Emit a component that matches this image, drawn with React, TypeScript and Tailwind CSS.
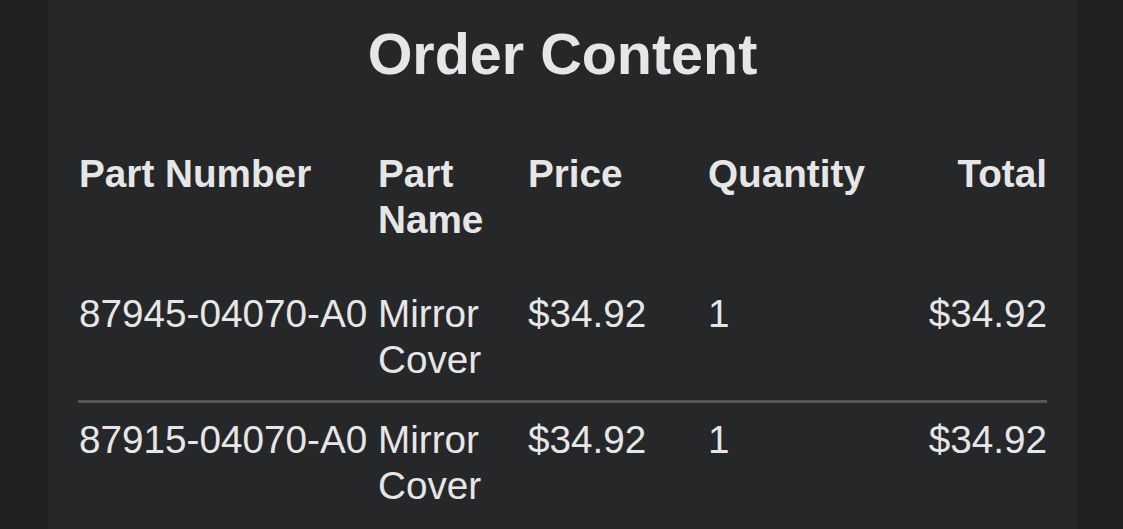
import React from "react";

type OrderLine = {
  partNumber: string;
  partName: string;
  price: string;
  quantity: number;
  total: string;
};

const LINES: OrderLine[] = [
  { partNumber: "87945-04070-A0", partName: "Mirror Cover", price: "$34.92", quantity: 1, total: "$34.92" },
  { partNumber: "87915-04070-A0", partName: "Mirror Cover", price: "$34.92", quantity: 1, total: "$34.92" },
];

export default function App() {
  return (
    <div
      className="min-h-screen bg-[#202123] text-[#e6e6e7] overflow-hidden"
      style={{ fontFamily: '"Liberation Sans", Arial, sans-serif' }}
    >
      <div className="ml-[48px] w-[1029px] min-h-[600px] bg-[#262729] px-[30px] pt-[20px]">
        <h2 className="text-center font-bold text-[57.5px] leading-[1.2] mb-[46px]">Order Content</h2>

        <table className="w-full table-fixed border-collapse text-[38.7px] leading-[46px]">
          <colgroup>
            <col className="w-[299px]" />
            <col className="w-[150px]" />
            <col className="w-[180px]" />
            <col className="w-[200px]" />
            <col />
          </colgroup>
          <thead>
            <tr className="font-bold align-top">
              <th className="text-left pl-[1px] pt-4 pb-[32px]">Part Number</th>
              <th className="text-left pl-[1px] pt-4 pb-[32px]">Part Name</th>
              <th className="text-left pl-[1px] pt-4 pb-[32px]">Price</th>
              <th className="text-left pl-[1px] pt-4 pb-[32px]">Quantity</th>
              <th className="text-right pt-4 pb-[32px]">Total</th>
            </tr>
          </thead>
          <tbody>
            {LINES.map((line, i) => (
              <tr key={i} className={`align-top ${i > 0 ? "border-t-[3px] border-[#555658]" : ""}`}>
                <td className={`pl-[1px] ${i > 0 ? "pt-[14px]" : "pt-4"} pb-[17px] whitespace-nowrap`}>{line.partNumber}</td>
                <td className={`pl-[1px] ${i > 0 ? "pt-[14px]" : "pt-4"} pb-[17px]`}>{line.partName}</td>
                <td className={`pl-[1px] ${i > 0 ? "pt-[14px]" : "pt-4"} pb-[17px]`}>{line.price}</td>
                <td className={`pl-[1px] ${i > 0 ? "pt-[14px]" : "pt-4"} pb-[17px]`}>{line.quantity}</td>
                <td className={`text-right ${i > 0 ? "pt-[14px]" : "pt-4"} pb-[17px]`}>{line.total}</td>
              </tr>
            ))}
          </tbody>
        </table>
      </div>
    </div>
  );
}
